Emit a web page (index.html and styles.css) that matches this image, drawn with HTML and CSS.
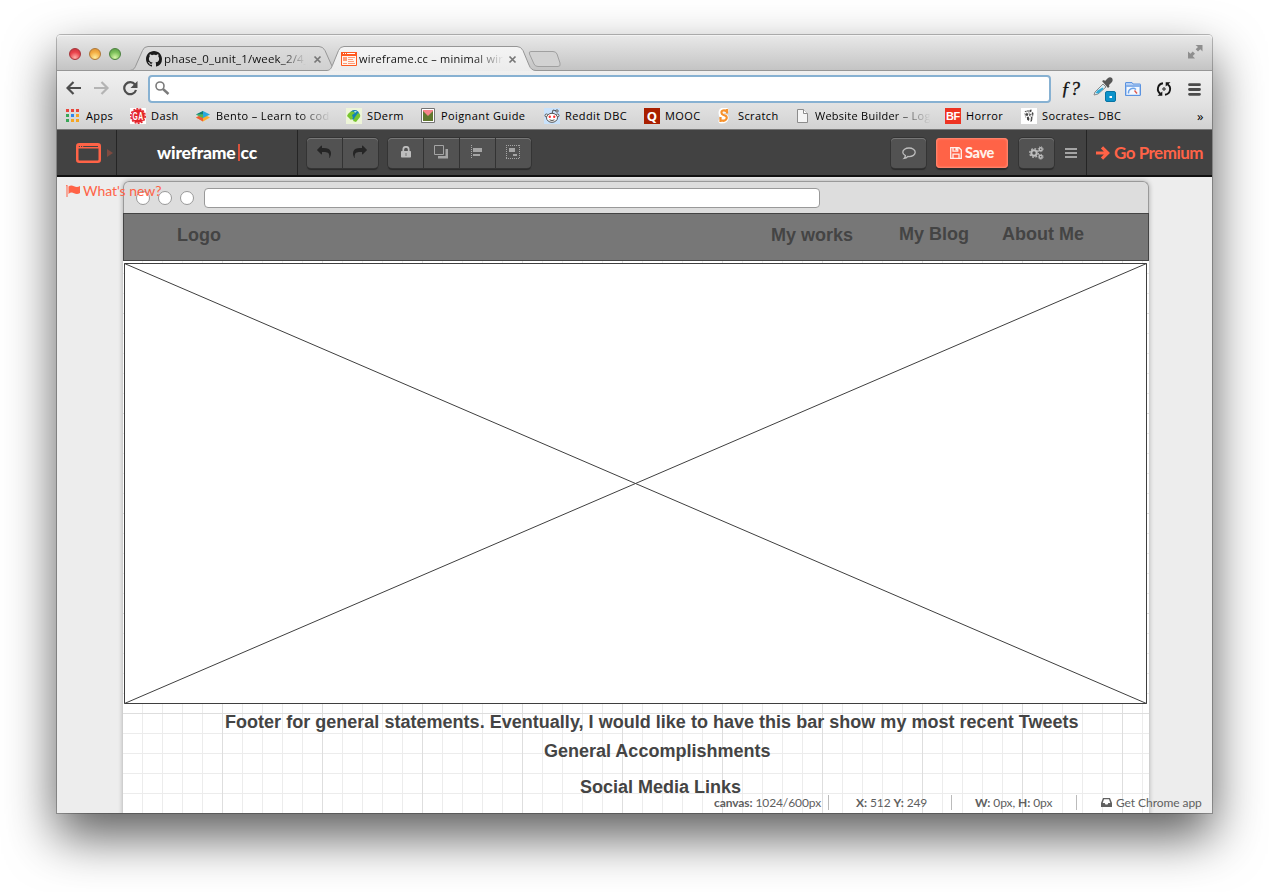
FILE: index.html
```html
<!DOCTYPE html>
<html lang="en">
<head>
<meta charset="utf-8">
<title>wireframe.cc - minimal wireframing tool</title>
<link rel="stylesheet" href="styles.css">
</head>
<body>
<div class="window">
  <header class="tabstrip">
    <svg class="tab-shapes" width="1155" height="36" viewBox="0 0 1155 36">
      <defs>
        <linearGradient id="idle" x1="0" y1="0" x2="0" y2="1"><stop offset="0" stop-color="#dcdcdc"/><stop offset="1" stop-color="#d0d0d0"/></linearGradient>
        <linearGradient id="active" x1="0" y1="0" x2="0" y2="1"><stop offset="0" stop-color="#f4f4f4"/><stop offset="1" stop-color="#ececec"/></linearGradient>
      </defs>
      <path d="M0 35.5H1155" stroke="#969696"/>
      <path d="M73 35.5C77 35 78 33 79.500 29L85.500 15.500Q87 11.500 91 11.500H262Q266 11.500 268 15.500L274 29Q276 35 280 35.500Z" fill="url(#idle)" stroke="#969696"/>
      <path d="M267 36.500C273 35.500 274 34 276 29L281.500 15.500Q283 11.500 287 11.500H460Q464 11.500 466 15.500L472 30Q474 35.500 479 35.500V36.500Z" fill="url(#active)"/>
      <path d="M269 35.500C273 35.500 274 34 276 29L281.500 15.500Q283 11.500 287 11.500H460Q464 11.500 466 15.500L472 30Q474 35.500 479 35.500" fill="none" stroke="#969696"/>
      <path d="M474 16.500H496Q499 16.500 500 19L503 28Q504 31.500 501 31.500H481Q478 31.500 477 29L472.500 19Q471.500 16.500 474 16.500Z" fill="#d2d2d2" stroke="#a0a0a0"/>
    </svg>
    <div class="lights"><i class="light red"></i><i class="light amber"></i><i class="light green"></i></div>
    <div class="tab tab-github">
      <svg width="16" height="16" viewBox="0 0 16 16"><path fill="#1b1b1b" d="M8 0C3.58 0 0 3.58 0 8c0 3.54 2.29 6.53 5.47 7.59.4.07.55-.17.55-.38 0-.19-.01-.82-.01-1.49-2.01.37-2.53-.49-2.69-.94-.09-.23-.48-.94-.82-1.13-.28-.15-.68-.52-.01-.53.63-.01 1.08.58 1.23.82.72 1.21 1.87.87 2.33.66.07-.52.28-.87.51-1.07-1.78-.2-3.64-.89-3.64-3.95 0-.87.31-1.59.82-2.15-.08-.2-.36-1.02.08-2.12 0 0 .67-.21 2.2.82.64-.18 1.32-.27 2-.27.68 0 1.36.09 2 .27 1.53-1.04 2.2-.82 2.2-.82.44 1.1.16 1.92.08 2.12.51.56.82 1.27.82 2.15 0 3.07-1.87 3.75-3.65 3.95.29.25.54.73.54 1.48 0 1.07-.01 1.93-.01 2.2 0 .21.15.46.55.38A8.013 8.013 0 0016 8c0-4.42-3.58-8-8-8z"/></svg>
      <span class="tab-title title-github">phase_0_unit_1/week_2/4_</span>
      <svg class="close" width="9" height="9" viewBox="0 0 9 9"><path d="M1.500 1.500l6 6M7.500 1.500l-6 6"/></svg>
    </div>
    <div class="tab tab-wire">
      <svg width="16" height="14" viewBox="0 0 16 14"><path fill="#fff5ee" stroke="#ff5a1f" d="M.5.5h15v13H.5z"/><path fill="#ff5a1f" d="M0 0h16v4H0z"/><path stroke="#fff" d="M2 1.500h1M4 1.500h1M6 1.500h8"/><path fill="#ff9c78" d="M2 5h4v4H2zM7 5h7v1H7zM7 7h5v1H7zM7 9h6v1H7zM2 11h4v1H2zM7 11h7v1H7z"/></svg>
      <span class="tab-title title-wire">wireframe.cc – minimal wire</span>
      <svg class="close" width="9" height="9" viewBox="0 0 9 9"><path d="M1.500 1.500l6 6M7.500 1.500l-6 6"/></svg>
    </div>
    <svg class="expand" width="15" height="15" viewBox="0 0 15 15" fill="#8e8e8e"><path d="M7.500 1H14.500V7.500L12.300 5.300L10 7.500L7.700 5.200L10 3ZM0 7.500L2.500 9.700L4.700 7.500L7 9.700L4.700 12L7 14.500H0Z"/></svg>
  </header>

  <div class="toolbar">
    <svg class="nav-icons" width="72" height="16" viewBox="0 0 72 16" fill="none" stroke-width="2.200">
      <path stroke="#4d4d4d" d="M15 8H2M7.500 2L1.500 8l6 6"/>
      <path stroke="#b4b4b4" d="M28 8h13M35.500 2l6 6-6 6"/>
      <path stroke="#4d4d4d" d="M69 4.500A6 6 0 1 0 70 10"/><path fill="#4d4d4d" d="M71.500 1v7h-7z"/>
    </svg>
    <div class="omnibox"><svg width="15" height="15" viewBox="0 0 15 15" fill="none" stroke="#7b7b7b"><circle cx="5" cy="5" r="4" stroke-width="1.600"/><path d="M8 8l5.500 5" stroke-width="2.400"/></svg></div>
    <div class="extensions">
      <span class="fn">ƒ?</span>
      <svg width="24" height="25" viewBox="0 0 24 25"><path fill="#d9edf5" stroke="#8a8a8a" d="M1 18l1-3 8-8 3 3-8 7z"/><path fill="#31a9d5" d="M2.500 16l2-2.500 5-3 1 1.500-5 4.500z"/><path fill="#555" d="M9 4l2-1 1 1 3-3c3-2 6 1 4 4l-3 3 .5 1.500L15 11z"/><rect x="12.500" y="14.500" width="10" height="10" rx="1.500" fill="#0c93cb" stroke="#0873a2"/><path fill="#fff" d="M16.500 19h2.500v2h-2.500z"/></svg>
      <svg width="16" height="14" viewBox="0 0 16 14"><path fill="#b5d0f5" stroke="#5b93e0" d="M.5 1Q.5.5 1 .5h6l1 1.500h7q.500 0 .500.500v10.500q0 .500-.500.500H.500z"/><path fill="#f4f9ff" d="M2 5h12v7.500H2z"/><path stroke="#5b93e0" d="M1 4h14"/><path fill="none" stroke="#6ba2e8" stroke-width="1.400" d="M3.500 11.500a4.500 4.500 0 0 1 7.500-4"/><path stroke="#e0574b" stroke-width="1.400" d="M9.500 8.500l2.500 3"/></svg>
      <svg width="16" height="16" viewBox="0 0 16 16" fill="none" stroke="#161616" stroke-width="1.900"><path d="M7 2.200A5.800 5.800 0 0 0 4.500 12.800M9 13.800A5.800 5.800 0 0 0 11.500 3.200"/><path fill="#161616" stroke="none" d="M1.500 14.700H6.300V10.500zM14.500 1.300H9.700V5.500z"/><circle cx="8" cy="8" r="1.200" stroke-width="1"/></svg>
      <svg width="13" height="13" viewBox="0 0 13 13"><path stroke="#4b4b4b" stroke-width="2.800" stroke-linecap="round" d="M1.500 1.700h10M1.500 6.500h10M1.500 11.300h10"/></svg>
    </div>
  </div>

  <nav class="bookmarks">
    <div class="bm"><svg width="16" height="16" viewBox="0 0 16 16"><g transform="translate(1 1)"><path fill="#e8453c" d="M0 0h3v3H0zM5 0h3v3H5zM10 0h3v3h-3z"/><path fill="#3aa757" d="M0 5h3v3H0zM0 10h3v3H0z"/><path fill="#2f86ee" d="M5 5h3v3H5z"/><path fill="#f5a623" d="M10 5h3v3h-3zM10 10h3v3h-3zM5 10h3v3H5z"/></g></svg><span>Apps</span></div>
    <div class="bm"><svg width="16" height="16" viewBox="0 0 16 16"><path fill="#fff" d="M0 0h16v16H0z"/><circle cx="8" cy="8" r="6.800" fill="#e3242b"/><circle cx="8" cy="8" r="7.200" fill="none" stroke="#e3242b" stroke-width="1.500" stroke-dasharray="2 1.200"/><text class="ga" transform="translate(8 12) scale(.8 1.300)" text-anchor="middle">GA</text></svg><span>Dash</span></div>
    <div class="bm"><svg width="16" height="16" viewBox="0 0 16 16"><path fill="#fbb02d" d="M1 9.500L8 6l7 3.500L8 13.500z"/><path fill="#ef5a3a" d="M1 9.500L8 6v7.500z"/><path fill="#2aa8dc" d="M1 6.500L8 3l7 3.500-7 3.500z"/><path fill="#15806e" d="M1 6.500L8 3v3.500z"/><path fill="#5cb544" d="M1 6.500h7V10z"/></svg><span class="fade-bento">Bento – Learn to cod</span></div>
    <div class="bm"><svg width="16" height="16" viewBox="0 0 16 16"><path fill="#edf5d8" d="M0 0h16v16H0z"/><circle cx="8.500" cy="7" r="5" fill="#1482b4"/><path fill="#77c52f" d="M1 8Q3 3 7 3.500l2 1.500-3 2 1 3-2 2zM9 9l3-4q3 1 2 4l-4 5-3-1z"/><path fill="#b7dfe5" d="M8 3h3L9 5z"/></svg><span>SDerm</span></div>
    <div class="bm"><svg width="16" height="16" viewBox="0 0 16 16"><path fill="#fff" stroke="#737373" d="M1.500 .5h13v14h-13z"/><path fill="#61782e" d="M3 2h10v11H3z"/><path fill="#f6848b" d="M3 2h10v1L8 8 3 3z"/></svg><span>Poignant Guide</span></div>
    <div class="bm"><svg width="16" height="16" viewBox="0 0 16 16"><path fill="#c9e2fb" d="M0 0h16v16H0z"/><g fill="#fff" stroke="#444" stroke-width=".9"><path fill="none" d="M8 6l1-4 4 1"/><circle cx="13" cy="3" r="1.200"/><circle cx="2.500" cy="7.500" r="1.500"/><circle cx="13.500" cy="7.500" r="1.500"/><ellipse cx="8" cy="9.800" rx="5.500" ry="4.500"/></g><circle cx="5.800" cy="8.800" r="1.200" fill="#f33"/><circle cx="10.200" cy="8.800" r="1.200" fill="#f33"/><path fill="none" stroke="#555" d="M5.500 11.800q2.500 1.500 5 0"/></svg><span>Reddit DBC</span></div>
    <div class="bm"><svg width="16" height="16" viewBox="0 0 16 16"><path fill="#a91f00" d="M0 0h16v16H0z"/><text class="q" x="8" y="12.800" text-anchor="middle">Q</text></svg><span>MOOC</span></div>
    <div class="bm"><svg width="16" height="16" viewBox="0 0 16 16" fill="none"><path stroke="#fff" stroke-width="5" stroke-linejoin="round" stroke-linecap="round" d="M9 2.500Q4 1 4 5t5 4q1 4-5 4"/><path stroke="#f7922c" stroke-width="2.200" d="M10 1v4.500M9.500 3.500Q8 2 6 2.500 3.500 3.500 5 6q1 1 3 1.500 3 1.500 1 4-2.500 2.500-5.500 0M3.500 9v5"/></svg><span>Scratch</span></div>
    <div class="bm"><svg width="16" height="16" viewBox="0 0 16 16"><path fill="#f5f5f5" stroke="#8c8c8c" d="M1.500 1.500h6l4 4v9h-10z"/><path fill="#fff" stroke="#8c8c8c" d="M7.500 1.500v4h4"/></svg><span class="fade-builder">Website Builder – Log</span></div>
    <div class="bm"><svg width="16" height="16" viewBox="0 0 16 16"><path fill="#ee3322" d="M0 0h16v16H0z"/><text class="bf" x="8" y="12.200" text-anchor="middle">BF</text></svg><span>Horror</span></div>
    <div class="bm"><svg width="16" height="16" viewBox="0 0 16 16"><path fill="#fff" d="M0 0h16v16H0z"/><g fill="#444"><path d="M3.500 3.500l2-1v2zM6.500 2h1v2h-1zM8.500 2l2-.5v2l-2 1zM11 4l1.500 1-.5 3-1.500-1zM4 6l2-1 1.500 1-1 2-2-.5zM8 5.500l2 .5-.5 1.500L8 8zM6 9l1.500-.5 1 2.500-1 2L6 11.500zM10 8.500l1.200.5L11 13l-1.500 1z"/></g><path stroke="#999" stroke-width=".7" fill="none" d="M3.500 5l1.500 5M12 6l-1 6M7.500 4l2 5"/></svg><span>Socrates– DBC</span></div>
    <span class="more">»</span>
  </nav>

  <header class="appbar">
    <div class="template"><svg width="25" height="20" viewBox="0 0 25 20"><rect x="1.250" y="1.250" width="22.500" height="17.500" rx="2" fill="none" stroke="#ff6347" stroke-width="2.500"/><path fill="#ff6347" d="M1 1h22v4.500H1z"/><path stroke="#444" d="M2.800 3.500h1.200M5 3.500h1.200M7.200 3.500h14.800"/></svg><i class="caret"></i></div>
    <div class="brand">wireframe<i></i>cc</div>
    <div class="group">
      <span class="btn"><svg width="14" height="14" viewBox="0 0 1792 1792" fill="#252525"><use href="#share" transform="matrix(-1 0 0 1 1792 0)"/></svg></span>
      <span class="btn"><svg width="14" height="14" viewBox="0 0 1792 1792" fill="#252525"><path id="share" d="M1792 640q0 26-19 45l-512 512q-19 19-45 19t-45-19-19-45v-256h-224q-98 0-175.500 6t-154 21.500-133 42.500-105.500 69.500-80 101-48.500 138.500-17.500 181q0 55 5 123 0 6 2.500 23.500t2.500 26.500q0 15-8.500 25t-23.500 10q-16 0-28-17-7-9-13-22t-13.500-30-10.500-24q-127-285-127-451 0-199 53-333 162-403 875-403h224v-256q0-26 19-45t45-19 45 19l512 512q19 19 19 45z"/></svg></span>
    </div>
    <div class="group tools">
      <span class="btn"><svg width="10" height="12" viewBox="0 0 10 12"><path fill="none" stroke="#bdbdbd" stroke-width="1.700" d="M2.300 6V3.500a2.700 2.700 0 0 1 5.400 0V6"/><rect y="5" width="10" height="6.500" rx=".7" fill="#bdbdbd"/><path stroke="#777" d="M5 7v3"/></svg></span>
      <span class="btn"><svg width="14" height="14" viewBox="0 0 14 14"><path fill="#a5a5a5" d="M11.500 4H14v9.500H4V11h7.500z"/><path fill="none" stroke="#a5a5a5" d="M.5.500h9v9h-9z"/></svg></span>
      <span class="btn"><svg width="12" height="14" viewBox="0 0 12 14"><path stroke="#a5a5a5" stroke-dasharray="1 1" d="M.5 0v14"/><path fill="#a5a5a5" d="M2 3h9v4H2zM2 9h7v2H2z"/></svg></span>
      <span class="btn"><svg width="14" height="14" viewBox="0 0 14 14"><path fill="none" stroke="#a5a5a5" stroke-dasharray="1 1" d="M.5 0v14M13.500 0v14M0 .5h14M0 13.500h14"/><path fill="#a5a5a5" d="M3 3h6v4H3zM7 9h4v2H7z"/></svg></span>
    </div>
    <div class="actions">
      <span class="btn solo"><svg width="14" height="13" viewBox="0 0 14 13"><path fill="none" stroke="#bdbdbd" stroke-width="1.300" d="M7 1c3.500 0 6.200 1.900 6.200 4.300S10.500 9.600 7 9.600q-.6 0-1.200-.1-1.500 1.600-3.600 1.900 1-1 1.200-2.700C1.800 7.900.8 6.700.8 5.300.8 2.900 3.500 1 7 1z"/></svg></span>
      <span class="btn save"><svg width="12" height="12" viewBox="0 0 12 12"><path fill="none" stroke="#fff0ec" stroke-width="1.300" d="M.7.700h8.300l2.300 2.300v8.300H.7zM3 11V7.200h6V11M3 1v3.200h4.800V1"/><path fill="#fff0ec" d="M5.400 1h2v2.500h-2z"/></svg>Save</span>
      <span class="btn solo"><svg width="15" height="14" viewBox="0 0 15 14" fill="none" stroke="#bdbdbd"><circle cx="5" cy="7" r="2.700" stroke-width="2"/><circle cx="5" cy="7" r="4.300" stroke-width="1.300" stroke-dasharray="1.700 1.677"/><circle cx="11.700" cy="3.200" r="1.500" stroke-width="1.400"/><circle cx="11.700" cy="3.200" r="2.500" stroke-width=".9" stroke-dasharray="1 .963"/><circle cx="11.700" cy="10.800" r="1.500" stroke-width="1.400"/><circle cx="11.700" cy="10.800" r="2.500" stroke-width=".9" stroke-dasharray="1 .963"/></svg></span>
      <svg class="menu" width="12" height="12" viewBox="0 0 12 12"><path fill="#a5a5a5" d="M0 1h12v2H0zM0 5h12v2H0zM0 9h12v2H0z"/></svg>
    </div>
    <div class="premium"><svg width="14" height="14" viewBox="0 0 14 14"><path fill="none" stroke="#ff6347" stroke-width="3.200" d="M0 7h11M6 1.300L11.700 7 6 12.700"/></svg><span>Go Premium</span></div>
  </header>

  <main class="workspace">
    <div class="canvas">
      <div class="mock-chrome"><i class="dot"></i><i class="dot"></i><i class="dot"></i><i class="address"></i></div>
      <div class="paper">
        <div class="mock-nav"></div>
        <svg class="placeholder" width="1023" height="441" viewBox="0 0 1023 441"><path fill="#fff" stroke="#3f3f3f" d="M.5.500h1022v440H.5zL1022.500 440.500M.5 440.500L1022.500.500"/></svg>
        <span class="note logo">Logo</span>
        <span class="note works">My works</span>
        <span class="note blog">My Blog</span>
        <span class="note about">About Me</span>
        <span class="note footer-line">Footer for general statements. Eventually, I would like to have this bar show my most recent Tweets</span>
        <span class="note accomplishments">General Accomplishments</span>
        <span class="note social">Social Media Links</span>
      </div>
    </div>
    <div class="whats-new"><svg width="14" height="12" viewBox="0 0 14 12"><path fill="#ff6347" d="M0 0h1.500v12H.500V1.500zM2.500 1.500Q5-.5 8 1.200T14 1v7Q11 9.800 8 8.200T2.500 9z"/></svg><span>What's new?</span></div>
    <div class="status">
      <span class="st-canvas"><b>canvas:</b> 1024/600px</span>
      <span class="st-xy"><b>X:</b> 512 <b>Y:</b> 249</span>
      <span class="st-wh"><b>W:</b> 0px, <b>H:</b> 0px</span>
      <span class="st-app"><svg width="11" height="9" viewBox="0 0 11 9"><path fill="#606060" fill-rule="evenodd" d="M2 0h7l2 5v4H0V5zM3 1.300L1.700 5h2l.8 1.500h2L7.300 5h2L8 1.300z"/></svg><span>Get Chrome app</span></span>
    </div>
  </main>
</div>
</body>
</html>
```
FILE: styles.css
```css
* { box-sizing: border-box; }
body { margin: 0; height: 892px; padding: 35px 57px 0; background: #fff; overflow: hidden; font-family: "Open Sans", sans-serif; }
svg { display: block; flex: none; }
.window { width: 1155px; height: 778px; display: flex; flex-direction: column; border-radius: 4px 4px 0 0; box-shadow: 0 0 0 1px rgba(0,0,0,.25), 0 23px 50px 1px rgba(0,0,0,.63); }

.tabstrip { position: relative; height: 36px; flex: none; display: flex; align-items: flex-start; border-radius: 4px 4px 0 0; background: linear-gradient(#e9e9e9, #c3c3c3); box-shadow: inset 0 1px #f3f3f3; }
.tab-shapes { position: absolute; left: 0; top: 0; }
.lights { display: flex; gap: 8px; padding: 13px 0 0 12px; width: 89px; }
.light { width: 12px; height: 12px; border-radius: 50%; border: 1px solid; }
.red { background: radial-gradient(circle at 50% 85%, #ffb0a8, #e9424a 55%, #c3303b); border-color: #a6343a; }
.amber { background: radial-gradient(circle at 50% 85%, #ffec9c, #f4ae43 55%, #d98d30); border-color: #ae7838; }
.green { background: radial-gradient(circle at 50% 85%, #d7f7a8, #7cc05a 55%, #559644); border-color: #4b813e; }
.tab { position: relative; display: flex; align-items: center; height: 16px; margin-top: 16px; font-size: 11px; color: #111; }
.tab-github { width: 195px; }
.tab-title { flex: none; margin-left: 2px; width: 149px; height: 16px; line-height: 15px; overflow: hidden; white-space: nowrap; }
.title-github { font-size: 11.500px; letter-spacing: .15px; -webkit-mask-image: linear-gradient(90deg, #000 116px, transparent 142px); }
.title-wire { letter-spacing: .25px; -webkit-mask-image: linear-gradient(90deg, #000 115px, transparent 145px); }
.close { fill: none; stroke: #777; stroke-width: 1.700; }
.expand { position: relative; margin: 9px 9px 0 auto; }

.toolbar { height: 33px; flex: none; display: flex; align-items: flex-start; padding: 4px 10px 0 9px; background: linear-gradient(#f0f0f0, #e2e2e2); }
.nav-icons { margin-top: 5px; }
.omnibox { margin-left: 10px; width: 903px; height: 28px; border: 2px solid #87b1d2; border-radius: 4px; background: #fff; padding: 4px 5px; }
.extensions { display: grid; grid-template-columns: 31px 32px 31px 32px 13px; align-items: center; padding-left: 11px; height: 28px; }
.fn { font: italic 400 19px/20px "Liberation Serif", serif; margin-left: -1px; color: #111; -webkit-text-stroke: .3px #111; }

.bookmarks { height: 26px; flex: none; display: grid; grid-template-columns: 65px 65px 151px 74px 124px 100px 73px 79px 149px 76px 176px 10px; align-items: center; padding: 0 0 1px 8px; border-bottom: 1px solid #777; background: linear-gradient(#e2e2e2, #d2d2d2); font-size: 11px; color: #000; white-space: nowrap; }
.bm { display: flex; align-items: center; gap: 5px; letter-spacing: .4px; line-height: 16px; }
.fade-bento { letter-spacing: .38px; -webkit-mask-image: linear-gradient(90deg, #000 82px, transparent 115px); }
.fade-builder { margin-left: -2px; letter-spacing: .25px; -webkit-mask-image: linear-gradient(90deg, #000 78px, transparent 116px); }
.more { font-size: 13px; line-height: 14px; }
.ga { font: bold 8.500px "Liberation Sans", sans-serif; fill: #fff; }
.q { font: bold 13px "Open Sans", sans-serif; fill: #fff; }
.bf { font: bold 11px "Liberation Sans", sans-serif; fill: #fff; letter-spacing: -.4px; }

.appbar { height: 47px; flex: none; display: flex; background: #424242; border-bottom: 2px solid #111; font-family: Lato, sans-serif; }
.template { width: 60px; display: flex; align-items: center; gap: 6px; padding-left: 19px; border-right: 1px solid #252525; }
.caret { border: 4px solid transparent; border-left: 6px solid #7e4a40; border-right: 0; }
.brand { width: 181px; display: flex; justify-content: center; align-items: center; font-size: 17.500px; font-weight: 900; letter-spacing: -.2px; color: #fff; border-right: 1px solid #252525; }
.brand i { width: 2px; height: 17px; margin: 0 1px 0 2px; background: #d9523c; }
.group { display: flex; height: 30px; margin: 8px 0 0 9px; background: #525252; border-radius: 4px; box-shadow: 0 0 0 1px #343434, 0 2px 1px #2b2b2b, inset 0 1px #777; }
.btn { width: 36px; height: 30px; display: flex; align-items: center; justify-content: center; }
.group .btn:first-child { width: 35px; }
.group .btn + .btn { border-left: 1px solid #333; }
.group .btn svg { margin: -2px 2px 0 0; }
.group.tools { margin-left: 10px; }
.tools .btn:first-child svg { margin-right: 0; }
.actions { margin-left: auto; display: flex; padding-top: 8px; }
.solo { width: 35px; background: #525252; border-radius: 4px; box-shadow: 0 0 0 1px #343434, 0 2px 1px #2b2b2b, inset 0 1px #777; }
.save { width: 72px; margin: 0 11px 0 10px; gap: 3px; background: #ff6347; color: #fff0ec; border-radius: 4px; box-shadow: 0 2px 1px #2b2b2b, inset 0 0 2px 1px #ff8c77; font-size: 14.500px; line-height: 16px; font-weight: 900; letter-spacing: -.35px; padding-bottom: 1px; }
.menu { margin: 9px 9px 0 11px; }
.premium { width: 126px; display: flex; align-items: center; gap: 4px; padding-left: 9px; border-left: 1px solid #252525; color: #ff6347; font-size: 17px; font-weight: 700; white-space: nowrap; }
.premium span { letter-spacing: -.5px; }

.workspace { position: relative; flex: 1; min-height: 0; overflow: hidden; background: #ededed; padding: 4px 63px 0 66px; display: flex; }
.canvas { width: 1026px; height: 800px; flex: none; border-radius: 6px 6px 0 0; box-shadow: 0 0 5px rgba(0,0,0,.3); background: #fff; display: flex; flex-direction: column; }
.mock-chrome { height: 33px; flex: none; display: flex; align-items: center; gap: 8px; padding-left: 12px; background: #ddd; border: 1px solid #999; border-bottom: 0; border-radius: 6px 6px 0 0; }
.dot { width: 14px; height: 14px; border: 1px solid #999; border-radius: 50%; background: #fff; }
.address { width: 616px; height: 20px; margin-left: 2px; border: 1px solid #999; border-radius: 4px; background: #fff; }
.paper { position: relative; flex: 1; background-image: linear-gradient(90deg, transparent 99px, #dedede 99px), linear-gradient(transparent 99px, #dedede 99px), linear-gradient(90deg, transparent 19px, #ececec 19px), linear-gradient(transparent 19px, #ececec 19px); background-size: 100px 100px, 100px 100px, 20px 20px, 20px 20px; }
.mock-nav { position: absolute; left: 0; top: -1px; width: 1026px; height: 48px; background: #777; border: 1px solid #444; }
.placeholder { position: absolute; left: 1px; top: 49px; }
.note { position: absolute; font: bold 18px/20px "Liberation Sans", sans-serif; color: #444; white-space: nowrap; }
.logo { left: 54px; top: 11px; }
.works { left: 648px; top: 11px; }
.blog { left: 776px; top: 10px; }
.about { left: 879px; top: 10px; }
.footer-line { left: 102px; top: 498px; letter-spacing: .02px; }
.accomplishments { left: 421px; top: 527px; }
.social { left: 457px; top: 563px; }

.whats-new { position: absolute; left: 9px; top: 5px; display: flex; align-items: center; gap: 3px; font: 14px/17px Lato, sans-serif; letter-spacing: -.05px; color: #ff6347; }
.status { position: absolute; right: 0; bottom: 3px; width: 498px; height: 15px; display: grid; grid-template-columns: 115px 123px 125px 135px; font: 12px/15px Lato, sans-serif; letter-spacing: -.1px; color: #606060; white-space: nowrap; }
.status > span { border-right: 1px solid #bbb; }
.status .st-xy { padding-left: 27px; }
.status .st-wh { padding-left: 23px; }
.status .st-app { display: flex; align-items: center; gap: 4px; padding-left: 24px; border: 0; letter-spacing: -.07px; }
```
